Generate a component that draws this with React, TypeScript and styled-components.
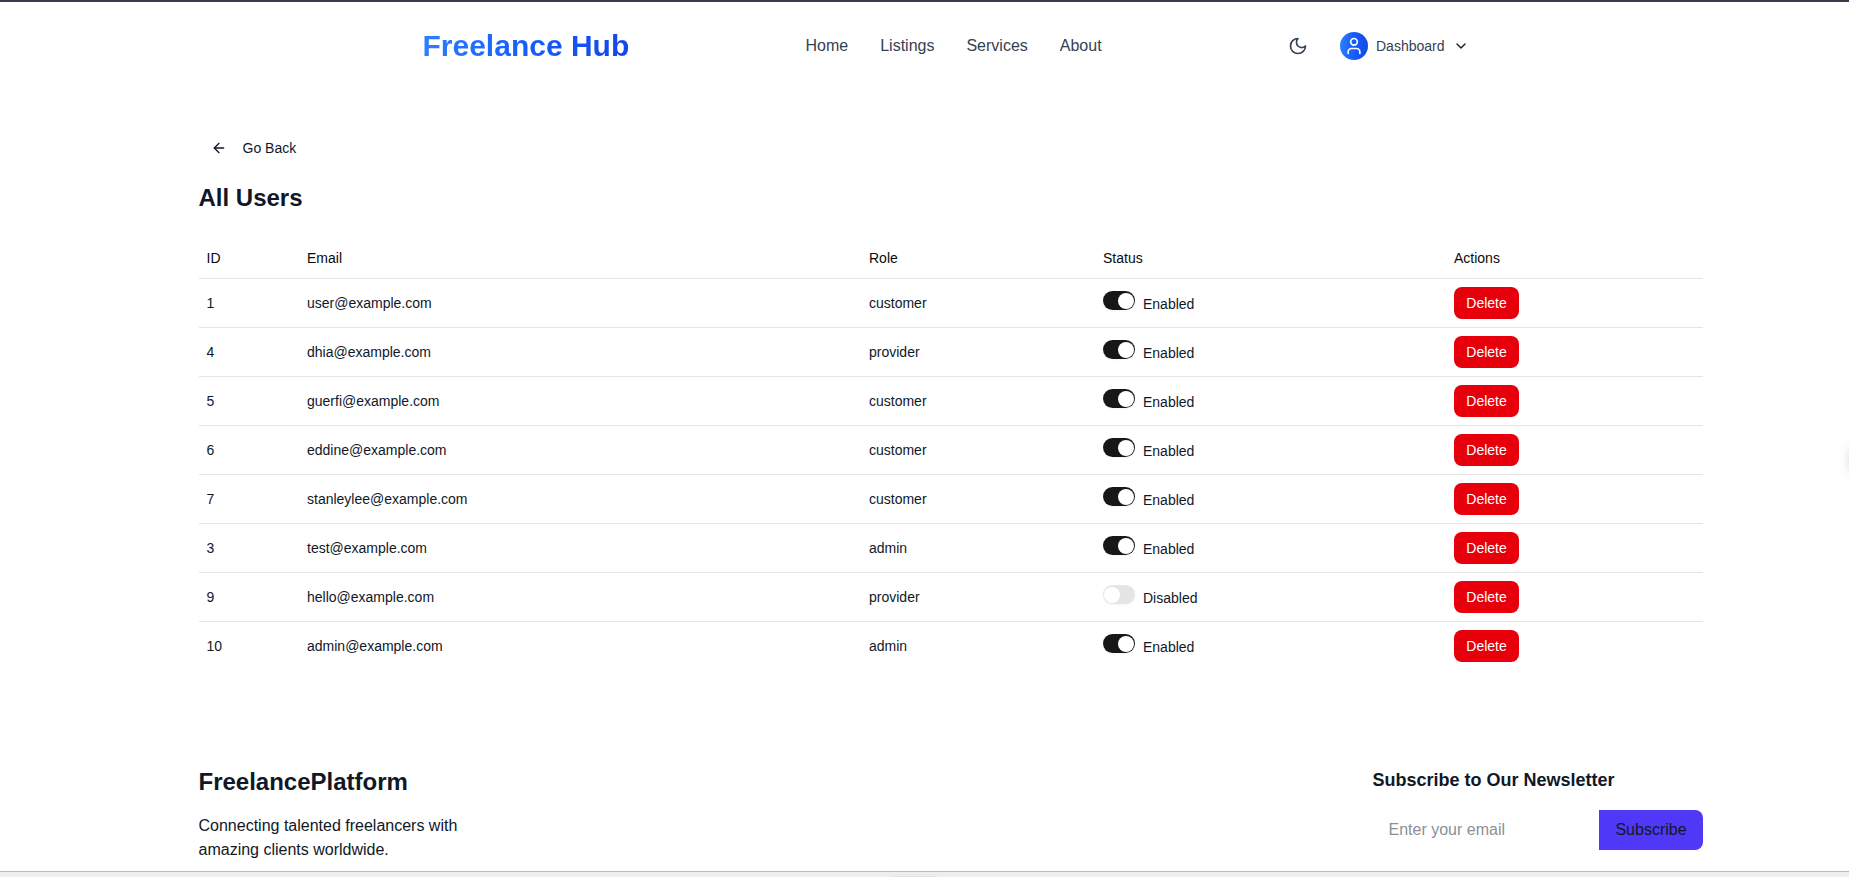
import React from 'react';
import styled, { createGlobalStyle } from 'styled-components';
import { ArrowLeft, ChevronDown, User } from 'lucide-react';

const GlobalStyle = createGlobalStyle`
  *, *::before, *::after { box-sizing: border-box; }
  html, body { margin: 0; padding: 0; overflow: hidden; }
  body {
    background: #fff;
    color: #101828;
    font-family: "Liberation Sans", Arial, sans-serif;
    font-size: 16px;
    line-height: 24px;
  }
  h1, h2, h3, p { margin: 0; }
  button, input { font: inherit; color: inherit; border: 0; background: none; padding: 0; }
`;

const Page = styled.div`
  position: relative;
  height: 877px;
  overflow: hidden;
  display: flex;
  flex-direction: column;
  border-top: 2px solid #3b394b;
`;

const Header = styled.header`
  display: flex;
  align-items: center;
  height: 88px;
  width: 1046px;
  margin-left: 422.5px;
`;

const Logo = styled.div`
  width: 207px;
  margin-right: 176px;
  font-size: 30px;
  line-height: 36px;
  font-weight: 700;
  white-space: nowrap;
  color: transparent;
  background: linear-gradient(to right, #2b7fff, #155dfc 50%, #1447e6);
  background-clip: text;
  -webkit-background-clip: text;
`;

const Nav = styled.nav`
  display: flex;
  gap: 32px;
  flex: 1;
`;

const NavLink = styled.a`
  color: #364153;
`;

const HeaderTools = styled.div`
  display: flex;
  align-items: center;
  gap: 32px;
  color: #364153;
`;

const AccountButton = styled.button`
  display: flex;
  align-items: center;
  gap: 8px;
  font-size: 14px;
  line-height: 20px;
`;

const Avatar = styled.span`
  display: flex;
  align-items: center;
  justify-content: center;
  width: 28px;
  height: 28px;
  border-radius: 50%;
  color: #fff;
  background: linear-gradient(to right, #2b7fff, #155dfc 50%, #1447e6);
`;

const Main = styled.main`
  width: 1504px;
  margin-left: 198.5px;
  padding-top: 40px;
  height: 670px;
`;

const BackButton = styled.button`
  display: flex;
  align-items: center;
  gap: 16px;
  height: 36px;
  padding: 0 12px;
  font-size: 14px;
  line-height: 20px;
`;

const PageTitle = styled.h1`
  margin: 16px 0 24px;
  font-size: 24px;
  line-height: 32px;
  font-weight: 700;
`;

const Table = styled.table`
  width: 100%;
  table-layout: fixed;
  border-collapse: separate;
  border-spacing: 0;
  font-size: 14px;
  line-height: 20px;
`;

const HeadCell = styled.th<{ $width: number }>`
  width: ${({ $width }) => $width}px;
  height: 41px;
  padding: 0 8px;
  border-bottom: 1px solid #e5e5e5;
  color: #0a0a0a;
  font-weight: 400;
  text-align: left;
`;

const Row = styled.tr`
  &:not(:last-child) td { border-bottom: 1px solid #e5e5e5; }
  &:last-child td { height: 48px; }
`;

const Cell = styled.td`
  height: 49px;
  padding: 0 8px;
  vertical-align: middle;
`;

const Status = styled.div`
  display: flex;
  align-items: flex-start;
  gap: 8px;
  height: 24px;
`;

const StatusLabel = styled.span`
  padding-top: 3px;
`;

const Switch = styled.span<{ $on: boolean }>`
  display: flex;
  align-items: center;
  justify-content: ${({ $on }) => ($on ? 'flex-end' : 'flex-start')};
  width: 32px;
  height: 19px;
  padding: 1px;
  border-radius: 10px;
  background: ${({ $on }) => ($on ? '#171717' : '#e5e5e5')};
  box-shadow: 0 1px 2px rgba(0, 0, 0, 0.05);
`;

const Thumb = styled.span`
  width: 16px;
  height: 16px;
  border-radius: 50%;
  background: #fff;
`;

const DeleteButton = styled.button`
  display: block;
  width: 65px;
  height: 32px;
  border-radius: 8px;
  background: #e7000b;
  color: #fff;
  text-align: center;
`;

const Footer = styled.footer`
  display: flex;
  justify-content: space-between;
  width: 1504.5px;
  margin-left: 198.5px;
  padding-top: 6px;
  height: 111px;
`;

const Brand = styled.div`
  width: 280px;
`;

const BrandName = styled.h2`
  margin-bottom: 16px;
  font-size: 24px;
  line-height: 32px;
  font-weight: 700;
`;

const Newsletter = styled.div`
  width: 330.5px;
`;

const NewsletterTitle = styled.h3`
  margin-bottom: 16px;
  font-size: 18px;
  line-height: 28px;
  font-weight: 700;
`;

const SubscribeForm = styled.form`
  display: flex;
  height: 40px;
`;

const EmailInput = styled.input`
  flex: 1;
  min-width: 0;
  padding: 0 16px;
  outline: 0;
  &::placeholder { color: #8b8f98; opacity: 1; }
`;

const SubscribeButton = styled.button`
  width: 104px;
  border-radius: 0 8px 8px 0;
  background: #4f39f6;
`;

const BottomEdge = styled.div`
  display: flex;
  justify-content: center;
  align-items: flex-end;
  height: 6px;
  padding-right: 18px;
  border-top: 1px solid #b8b8b8;
  background: #eee;
`;

const Grip = styled.div`
  width: 43px;
  height: 1px;
  background: #e2e2e2;
`;

const EdgeShadow = styled.div`
  position: absolute;
  top: 438px;
  left: 1851px;
  width: 40px;
  height: 40px;
  border-radius: 50%;
  box-shadow: 0 0 12px rgba(0, 0, 0, 0.25);
`;

const MoonIcon = () => (
  <svg width="20" height="20" viewBox="0 0 24 24" fill="none" stroke="currentColor" strokeWidth="2" strokeLinecap="round" strokeLinejoin="round">
    <path d="M12 3a6 6 0 0 0 9 9 9 9 0 1 1-9-9Z" />
  </svg>
);

const columns = [
  { label: 'ID', width: 100.5 },
  { label: 'Email', width: 562 },
  { label: 'Role', width: 234 },
  { label: 'Status', width: 351 },
  { label: 'Actions', width: 256.5 },
];

const users = [
  { id: 1, email: 'user@example.com', role: 'customer', enabled: true },
  { id: 4, email: 'dhia@example.com', role: 'provider', enabled: true },
  { id: 5, email: 'guerfi@example.com', role: 'customer', enabled: true },
  { id: 6, email: 'eddine@example.com', role: 'customer', enabled: true },
  { id: 7, email: 'stanleylee@example.com', role: 'customer', enabled: true },
  { id: 3, email: 'test@example.com', role: 'admin', enabled: true },
  { id: 9, email: 'hello@example.com', role: 'provider', enabled: false },
  { id: 10, email: 'admin@example.com', role: 'admin', enabled: true },
];

export default function App() {
  return (
    <>
      <GlobalStyle />
      <Page>
        <Header>
          <Logo>Freelance Hub</Logo>
          <Nav>
            {['Home', 'Listings', 'Services', 'About'].map((item) => (
              <NavLink key={item}>{item}</NavLink>
            ))}
          </Nav>
          <HeaderTools>
            <MoonIcon />
            <AccountButton>
              <Avatar><User size={20} /></Avatar>
              <span>Dashboard</span>
              <ChevronDown size={16} color="#101828" />
            </AccountButton>
          </HeaderTools>
        </Header>
        <Main>
          <BackButton>
            <ArrowLeft size={16} />
            Go Back
          </BackButton>
          <PageTitle>All Users</PageTitle>
          <Table>
            <thead>
              <tr>
                {columns.map((c) => (
                  <HeadCell key={c.label} $width={c.width}>{c.label}</HeadCell>
                ))}
              </tr>
            </thead>
            <tbody>
              {users.map((u) => (
                <Row key={u.id}>
                  <Cell>{u.id}</Cell>
                  <Cell>{u.email}</Cell>
                  <Cell>{u.role}</Cell>
                  <Cell>
                    <Status>
                      <Switch $on={u.enabled}><Thumb /></Switch>
                      <StatusLabel>{u.enabled ? 'Enabled' : 'Disabled'}</StatusLabel>
                    </Status>
                  </Cell>
                  <Cell><DeleteButton>Delete</DeleteButton></Cell>
                </Row>
              ))}
            </tbody>
          </Table>
        </Main>
        <Footer>
          <Brand>
            <BrandName>FreelancePlatform</BrandName>
            <p>Connecting talented freelancers with amazing clients worldwide.</p>
          </Brand>
          <Newsletter>
            <NewsletterTitle>Subscribe to Our Newsletter</NewsletterTitle>
            <SubscribeForm>
              <EmailInput type="email" placeholder="Enter your email" />
              <SubscribeButton type="button">Subscribe</SubscribeButton>
            </SubscribeForm>
          </Newsletter>
        </Footer>
        <BottomEdge><Grip /></BottomEdge>
        <EdgeShadow />
      </Page>
    </>
  );
}
